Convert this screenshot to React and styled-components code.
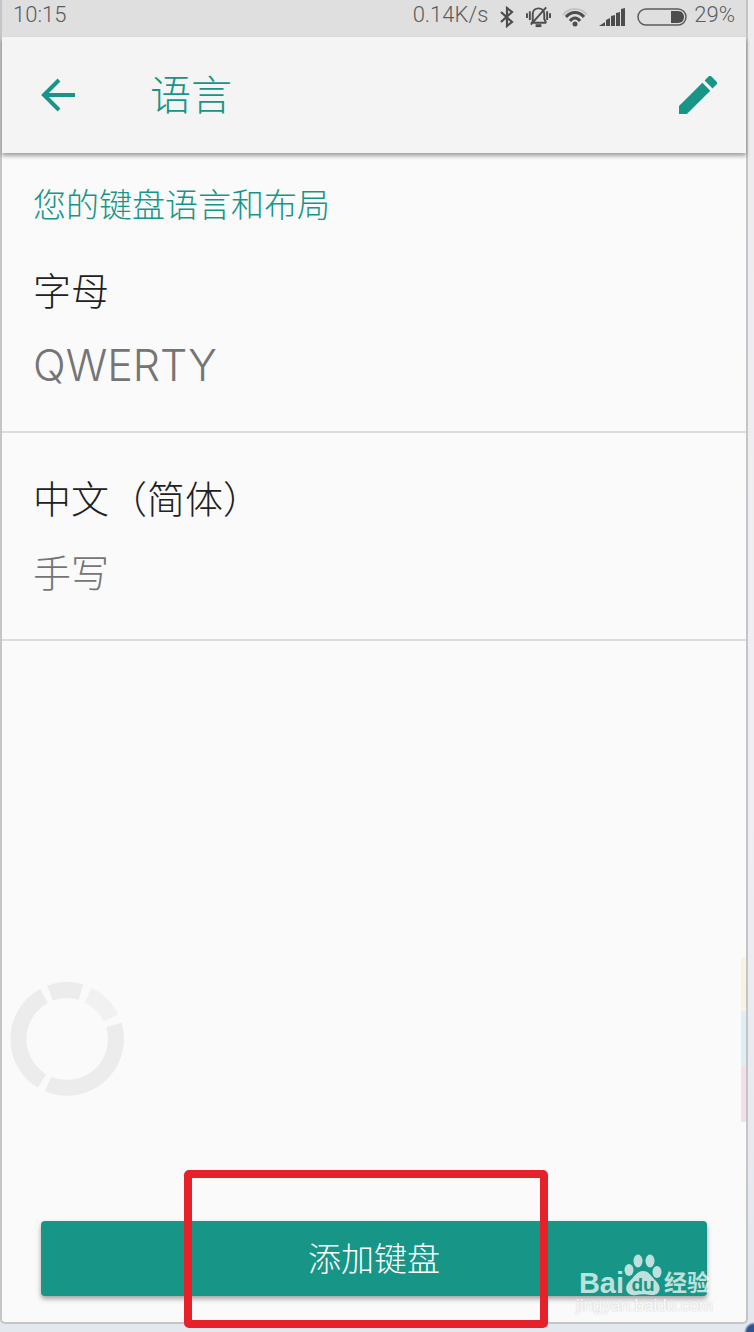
import React from "react";
import styled, { createGlobalStyle } from "styled-components";

const GlobalStyle = createGlobalStyle`
  * {
    box-sizing: border-box;
  }

  body {
    margin: 0;
    font-family: Inter, "Noto Sans CJK SC", sans-serif;
    font-weight: 300;
  }
`

const Desktop = styled.div`
  display: flex;
  min-height: 100vh;
  padding: 0 6px 8px 0;
  background: radial-gradient(circle at 100% 100%, #31538f 0, #31538f 7px, transparent 10px),
    linear-gradient(#eeecef 0%, #f0eef2 60%, #e3e7ee 100%);
`

const Screen = styled.div`
  position: relative;
  flex: 1;
  display: flex;
  flex-direction: column;
  background: #fafafa;
  border: 2px solid #c5c5c8;
  border-top: 0;
  border-radius: 0 0 5px 5px;
`

const StatusBar = styled.div`
  display: flex;
  align-items: center;
  justify-content: space-between;
  height: 37px;
  padding: 0 11px 7px;
  background: #dfdfdf;
  color: #5c5c5c;
  font-family: Roboto, sans-serif;
  font-size: 22px;
  line-height: 28px;
`

const StatusIcons = styled.div`
  display: flex;
  align-items: center;
  gap: 11px;

  svg {
    display: block;
    margin-top: 3px;
  }
`

const Battery = styled.div`
  display: flex;
  align-items: center;
  gap: 7px;
`

const Header = styled.header`
  display: flex;
  align-items: center;
  height: 116px;
  padding: 0 24px 0 32px;
  background: #f4f4f4;
  box-shadow: 0 3px 4px rgba(0, 0, 0, 0.35);
  color: #179587;
`

const IconButton = styled.button`
  display: flex;
  align-items: center;
  justify-content: center;
  width: 48px;
  height: 48px;
  padding: 0;
  border: 0;
  background: none;
  color: inherit;
`

const Title = styled.h1`
  flex: 1;
  margin: 0 0 0 68px;
  font-size: 41px;
  font-weight: 300;
  line-height: 48px;
`

const SectionTitle = styled.h2`
  margin: 0;
  padding: 32px 31px 0;
  color: #179587;
  font-size: 33px;
  font-weight: 300;
  line-height: 40px;
`

const List = styled.ul`
  margin: 0;
  padding: 0;
  list-style: none;
`

const Item = styled.li`
  display: flex;
  flex-direction: column;
  gap: 26px;
  padding: 42px 31px;
  border-bottom: 2px solid #dcdcdc;
  line-height: 48px;
`

const Language = styled.span`
  color: #212121;
  font-size: 38px;
`

const Layout = styled.span`
  color: #757575;
  font-size: ${props => props.$latin ? "43px" : "38px"};
`

const Footer = styled.footer`
  position: relative;
  display: flex;
  margin-top: auto;
  padding: 0 39px 26px;
`

const AddButton = styled.button`
  flex: 1;
  height: 75px;
  padding: 0 0 3px;
  border: 0;
  border-radius: 4px;
  background: #179587;
  box-shadow: 0 3px 5px rgba(0, 0, 0, 0.35);
  color: #fff;
  font: inherit;
  font-size: 33px;
`

const Highlight = styled.div`
  position: absolute;
  bottom: -6px;
  left: calc(50% - 190px);
  width: 364px;
  height: 158px;
  border: 8px solid #e62129;
  border-radius: 5px;
  pointer-events: none;
`

const AssistRing = styled.svg`
  position: absolute;
  bottom: 226px;
  left: 8px;
`

const EdgeStrip = styled.div`
  position: absolute;
  right: 0;
  bottom: 200px;
  width: 5px;
  height: 165px;
  background: linear-gradient(#faf3e2 0 33%, #dceff3 33% 66%, #f4dfe6 66%);
`

const Watermark = styled.div`
  position: absolute;
  right: 33px;
  bottom: 6px;
  color: rgba(255, 255, 255, 0.72);
  font-family: "Liberation Sans", "Noto Sans CJK SC", sans-serif;
  pointer-events: none;
`

const Brand = styled.div`
  display: flex;
  align-items: flex-end;
  justify-content: center;
  font-size: 23px;
  font-weight: 700;
  line-height: 26px;

  b {
    font-size: 29px;
  }

  svg {
    margin-right: 2px;
  }
`

const Site = styled.div`
  font-size: 17px;
  line-height: 20px;
  color: #fafafa;
  text-shadow: 0 0 2px #c4c4c4;
`

const languages = [
  { name: "字母", layout: "QWERTY", latin: true },
  { name: "中文（简体）", layout: "手写" },
]

const BluetoothIcon = () => (
  <svg width="16" height="22" viewBox="0 0 16 22" fill="none" stroke="#4d4d4d" strokeWidth="2.200">
    <path d="M2 6 L13 16 L8 20 V2 L13 6 L2 16" />
  </svg>
)

const MutedIcon = () => (
  <svg width="25" height="24" viewBox="0 0 26 24" fill="none" stroke="#4d4d4d" strokeWidth="2">
    <path d="M5 18 H21 M7 17 V9 C7 5 10 3 13 3 C16 3 19 5 19 9 V14 L21 18 M21 2 L5 20" />
    <path d="M10 21 H16" strokeWidth="3" />
    <path d="M4 6 V15 M1 8 V13 M22 6 V15 M25 8 V13" />
  </svg>
)

const WifiIcon = () => (
  <svg width="26" height="20" viewBox="0 0 26 20" fill="none" strokeWidth="3">
    <path d="M1 8 C7 0 19 0 25 8" stroke="#c4c4c4" strokeWidth="2" />
    <path d="M4 10 C9 4 17 4 22 10 M8 14 C11 10 15 10 18 14" stroke="#4d4d4d" />
    <circle cx="13" cy="17" r="2.500" fill="#4d4d4d" />
  </svg>
)

const SignalIcon = () => (
  <svg width="27" height="18" viewBox="0 0 27 18" fill="#4d4d4d">
    <path d="M0 18 L6 14 V18 Z M7 12 L11 10 V18 H7 Z M12 8 L16 7 V18 H12 Z M17 5 L21 4 V18 H17 Z M22 1 L26 0 V18 H22 Z" />
  </svg>
)

const BatteryIcon = () => (
  <svg width="50" height="18" viewBox="0 0 50 18">
    <rect x="1" y="1" width="48" height="16" rx="8" fill="none" stroke="#5c5c5c" strokeWidth="1.500" />
    <path d="M34 3 H41 C49 3 49 15 41 15 H34 Z" fill="#4d4d4d" />
  </svg>
)

const BackIcon = () => (
  <svg width="34" height="34" viewBox="0 0 34 34" fill="none" stroke="currentColor" strokeWidth="4">
    <path d="M34 17 H3 M18 2 L3 17 L18 32" />
  </svg>
)

const PencilIcon = () => (
  <svg width="38" height="38" viewBox="3 3 18 18" fill="currentColor">
    <path d="M3 17.250V21h3.750L17.810 9.940l-3.750-3.750L3 17.250zM20.710 7.040a1 1 0 0 0 0-1.410l-2.340-2.340a1 1 0 0 0-1.410 0l-1.830 1.830 3.750 3.750 1.830-1.830z" />
  </svg>
)

const PawIcon = () => (
  <svg width="38" height="42" viewBox="0 0 38 42" fill="rgba(255,255,255,0.72)">
    <ellipse cx="5" cy="16" rx="4.500" ry="6" />
    <ellipse cx="14" cy="7" rx="4.500" ry="6.500" />
    <ellipse cx="26" cy="7" rx="4.500" ry="6.500" />
    <ellipse cx="33" cy="18" rx="4.500" ry="6" />
    <path d="M19 17 C25 17 27 22 32 27 C39 34 35 42 27 41 C21 40 17 40 12 41 C3 43 -1 34 5 28 C10 23 13 17 19 17 Z" />
    <text x="19" y="37" textAnchor="middle" fill="#179587" fontSize="19" fontWeight="700">du</text>
  </svg>
)

const App = () => {
  return (
    <Desktop>
      <GlobalStyle />
      <Screen>
        <StatusBar>
          <span>10:15</span>
          <StatusIcons>
            <span>0.14K/s</span>
            <BluetoothIcon />
            <MutedIcon />
            <WifiIcon />
            <SignalIcon />
            <Battery>
              <BatteryIcon />
              <span>29%</span>
            </Battery>
          </StatusIcons>
        </StatusBar>
        <Header>
          <IconButton aria-label="返回"><BackIcon /></IconButton>
          <Title>语言</Title>
          <IconButton aria-label="编辑"><PencilIcon /></IconButton>
        </Header>
        <SectionTitle>您的键盘语言和布局</SectionTitle>
        <List>
          {languages.map(item => (
            <Item key={item.name}>
              <Language>{item.name}</Language>
              <Layout $latin={item.latin}>{item.layout}</Layout>
            </Item>
          ))}
        </List>
        <Footer>
          <AddButton>添加键盘</AddButton>
          <Highlight />
          <Watermark>
            <Brand>
              <b>Bai</b>
              <PawIcon />
              <span>经验</span>
            </Brand>
            <Site>jingyan.baidu.com</Site>
          </Watermark>
        </Footer>
        <AssistRing width="114" height="114" viewBox="0 0 114 114" fill="none" stroke="#ececec" strokeWidth="16">
          <path d="M104 43 A49 49 0 0 1 38 102" />
          <path d="M32 99 A49 49 0 0 1 34 14" />
          <path d="M40 11 A49 49 0 0 1 71 10" />
          <path d="M78 13 A49 49 0 0 1 101 36" stroke="#f1f1f1" />
        </AssistRing>
        <EdgeStrip />
      </Screen>
    </Desktop>
  )
}

export default App
